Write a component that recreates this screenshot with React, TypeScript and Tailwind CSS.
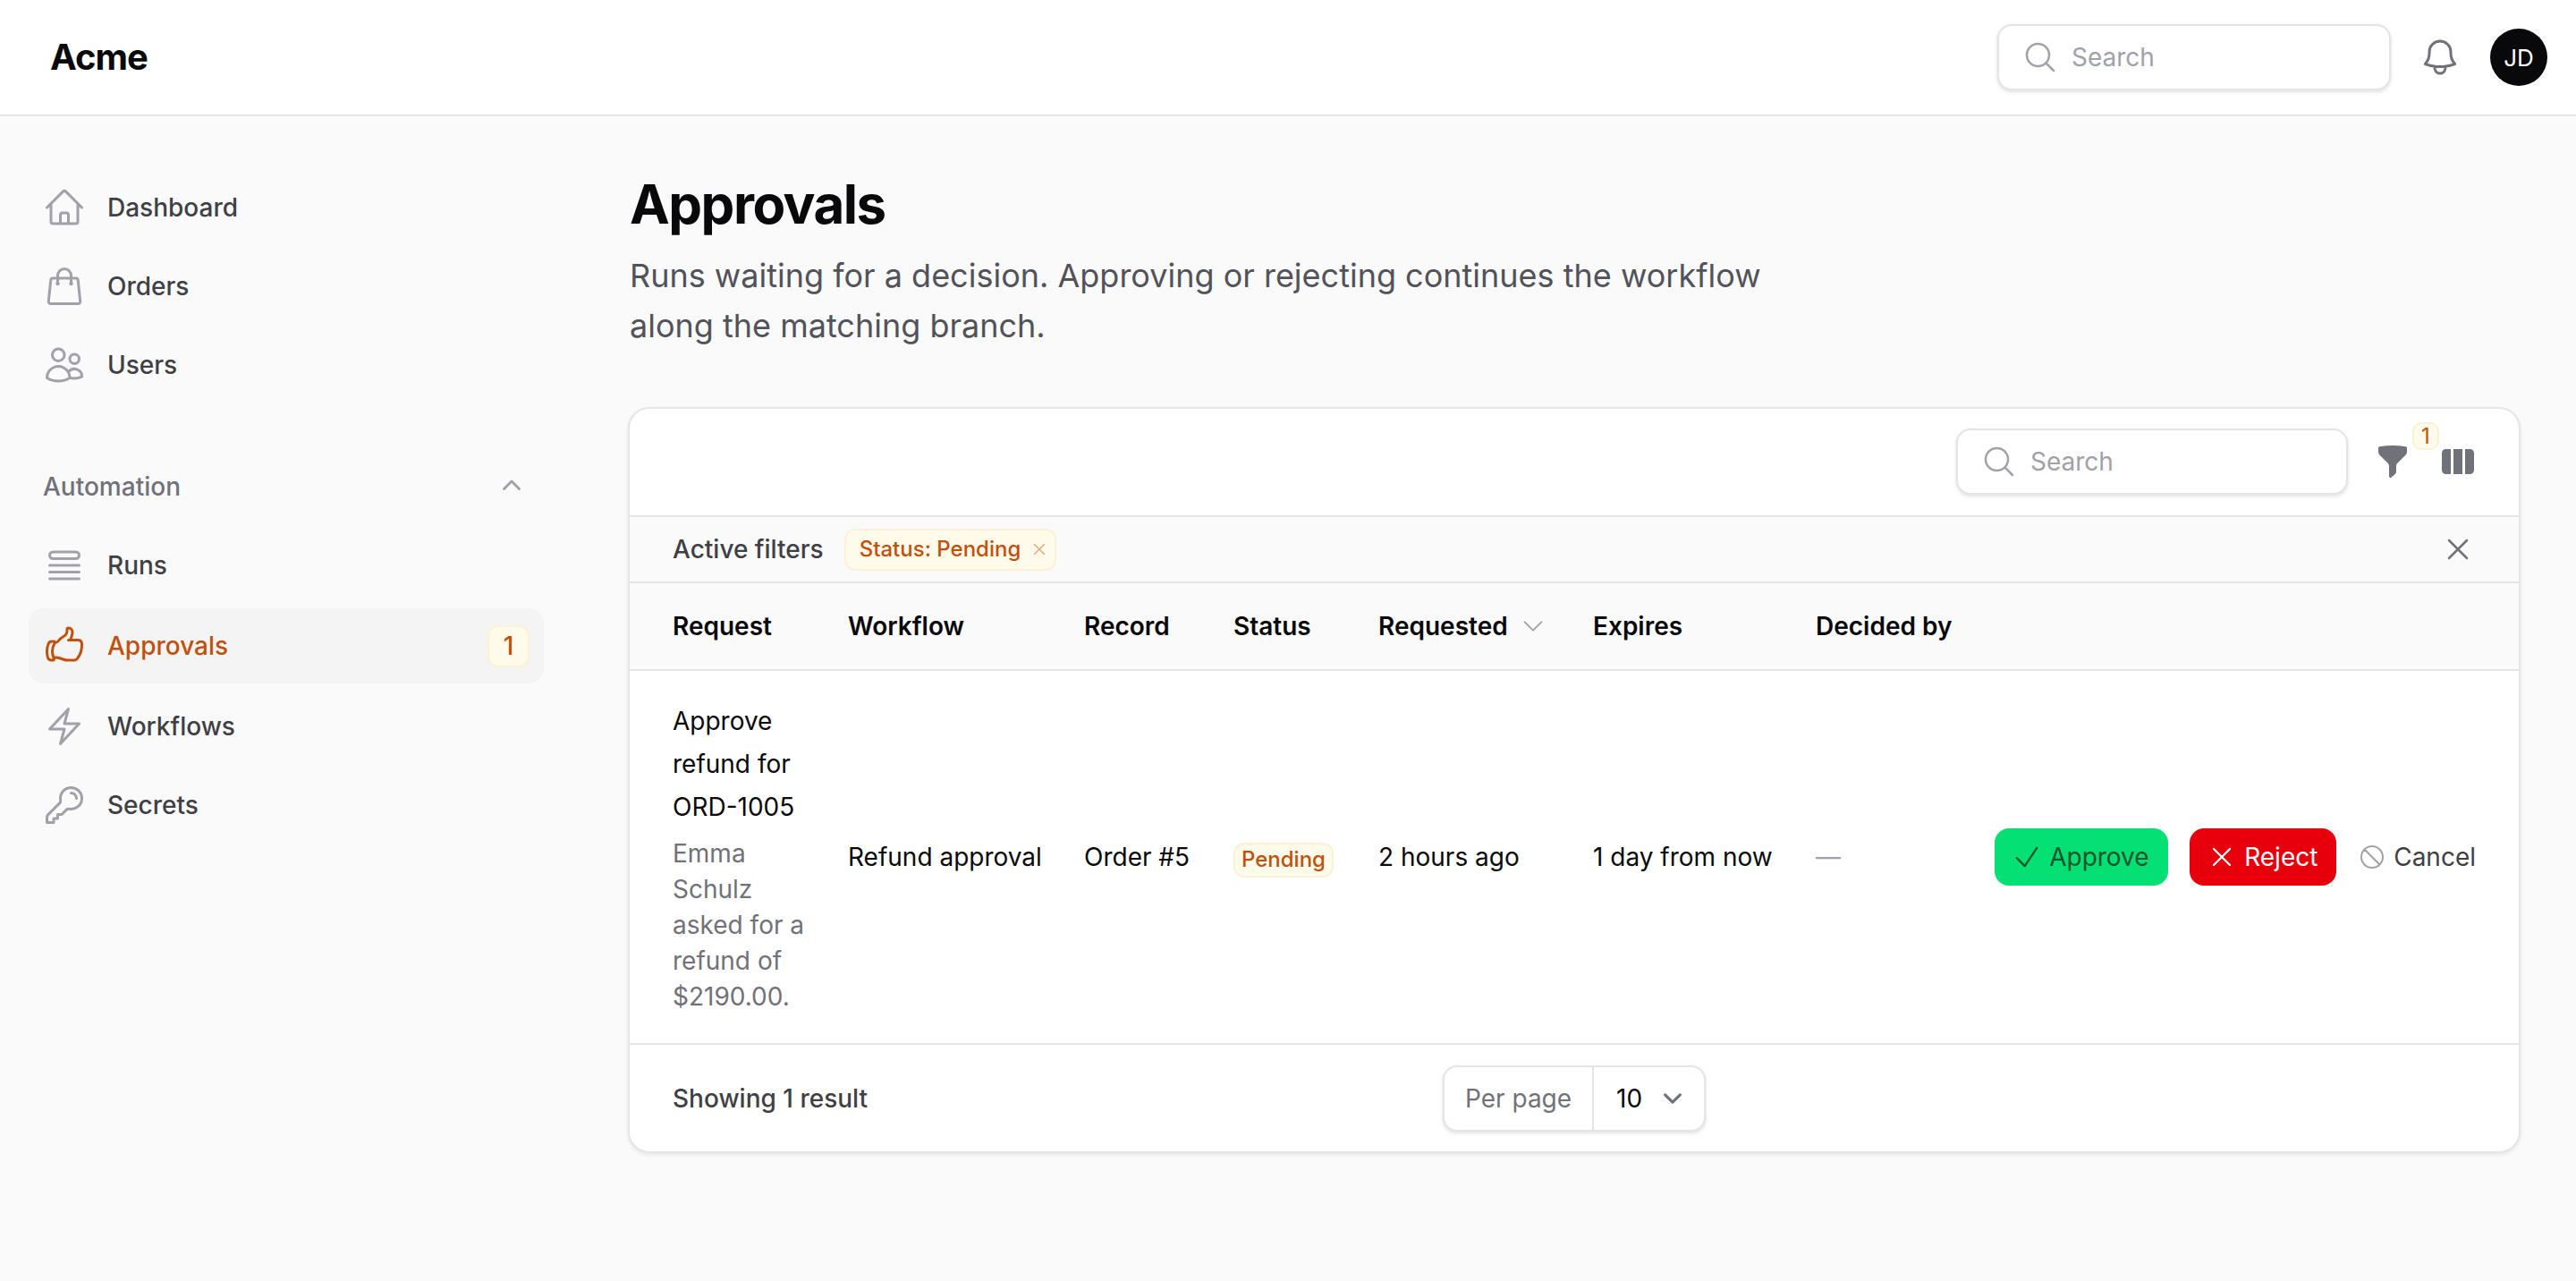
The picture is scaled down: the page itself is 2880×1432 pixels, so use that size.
import type { ComponentType, ReactNode } from "react";
import {
  HiMiniChevronUp,
  HiMiniFunnel,
  HiMiniViewColumns,
  HiOutlineBell,
  HiOutlineBolt,
  HiOutlineCheck,
  HiOutlineChevronDown,
  HiOutlineHandThumbUp,
  HiOutlineHome,
  HiOutlineKey,
  HiOutlineMagnifyingGlass,
  HiOutlineNoSymbol,
  HiOutlineQueueList,
  HiOutlineShoppingBag,
  HiOutlineUsers,
  HiOutlineXMark,
} from "react-icons/hi2";

type Icon = ComponentType<{ className?: string }>;

function NavItem({ icon: Glyph, label, active, badge }: { icon: Icon; label: string; active?: boolean; badge?: string }) {
  return (
    <div
      className={`flex items-center gap-[24px] rounded-[16px] px-[16px] ${
        active ? "h-[84px] bg-[#f4f4f5] text-[#c2500a]" : "h-[80px] text-[#3f3f46]"
      }`}
    >
      <Glyph className={`size-[48px] shrink-0 ${active ? "text-[#c2500a]" : "text-[#a1a1aa]"}`} />
      <span className="flex-1 text-[28px] leading-[48px] font-medium">{label}</span>
      {badge && (
        <span className="flex h-[47px] w-[47px] items-center justify-center rounded-[12px] border-2 border-[#fef0d5] bg-[#fffbeb] text-[28px] leading-none font-medium">
          {badge}
        </span>
      )}
    </div>
  );
}

function SearchBox({ width }: { width: string }) {
  return (
    <div className={`flex h-[74px] items-center gap-[15px] rounded-[16px] border-2 border-[#e4e4e7] bg-white pl-[26px] shadow-[0_2px_4px_rgba(0,0,0,0.12)] ${width}`}>
      <HiOutlineMagnifyingGlass className="size-[40px] text-[#a1a1aa]" />
      <span className="text-[28px] text-[#a1a1aa]">Search</span>
    </div>
  );
}

function Th({ children }: { children: ReactNode }) {
  return <th className="px-[24px] text-left text-[28px] font-semibold text-[#09090b] first:pl-[48px]">{children}</th>;
}

export default function App() {
  return (
    <div className="flex h-[1432px] flex-col bg-[#fafafa] font-['Inter',sans-serif] antialiased">
      <header className="flex h-[130px] shrink-0 items-center border-b-2 border-[#e5e5e5] bg-white pr-[32px] pl-[56px]">
        <div className="flex-1 text-[40px] font-bold tracking-tight text-[#09090b]">Acme</div>
        <SearchBox width="w-[440px]" />
        <HiOutlineBell className="mr-[32px] ml-[31px] size-[48px] text-[#71717a]" />
        <div className="flex size-[64px] items-center justify-center rounded-full bg-[#09090b] text-[26px] text-white">JD</div>
      </header>

      <div className="flex flex-1">
        <aside className="w-[640px] shrink-0 px-[32px] pt-[62px]">
          <nav className="flex flex-col gap-[8px]">
            <NavItem icon={HiOutlineHome} label="Dashboard" />
            <NavItem icon={HiOutlineShoppingBag} label="Orders" />
            <NavItem icon={HiOutlineUsers} label="Users" />
          </nav>
          <div className="mt-[56px] flex h-[80px] items-center justify-between px-[16px] text-[28px] font-medium text-[#71717a]">
            Automation
            <HiMiniChevronUp className="size-[40px] text-[#a1a1aa]" />
          </div>
          <nav className="mt-[8px] flex flex-col gap-[8px]">
            <NavItem icon={HiOutlineQueueList} label="Runs" />
            <NavItem icon={HiOutlineHandThumbUp} label="Approvals" active badge="1" />
            <NavItem icon={HiOutlineBolt} label="Workflows" />
            <NavItem icon={HiOutlineKey} label="Secrets" />
          </nav>
        </aside>

        <main className="min-w-0 flex-1 px-[64px] pt-[62px]">
          <h1 className="text-[60px] leading-[72px] font-bold tracking-tight text-[#09090b]">Approvals</h1>
          <p className="mt-[16px] max-w-[1344px] text-[36px] leading-[56px] text-[#52525b]">
            Runs waiting for a decision. Approving or rejecting continues the workflow along the matching branch.
          </p>

          <section className="-mx-[2px] mt-[63px] overflow-hidden rounded-[24px] border-2 border-[#e5e5e5] bg-white shadow-[0_2px_4px_rgba(0,0,0,0.08)]">
            <div className="flex h-[119px] items-center justify-end pr-[48px] pb-[1px]">
              <SearchBox width="w-[438px]" />
              <div className="relative ml-[30px]">
                <HiMiniFunnel className="size-[40px] text-[#71717a]" />
                <span className="absolute -top-[24px] left-[42px] flex h-[31px] w-[30px] items-center justify-center rounded-[10px] border-2 border-[#fef0d5] bg-[#fffbeb] text-[24px] leading-none text-[#c2500a]">
                  1
                </span>
              </div>
              <HiMiniViewColumns className="ml-[33px] size-[40px] text-[#71717a]" />
            </div>

            <div className="flex h-[74px] items-center border-t-2 border-[#e5e5e5] bg-[#fafafa] px-[48px]">
              <span className="text-[28px] font-medium text-[#3f3f46]">Active filters</span>
              <span className="ml-[23px] flex h-[47px] items-center gap-[10px] rounded-[12px] border-2 border-[#fef0d5] bg-[#fffbeb] pr-[6px] pl-[15px] text-[24px] font-medium text-[#c2500a]">
                Status: Pending
                <HiOutlineXMark className="size-[22px] opacity-50" />
              </span>
              <HiOutlineXMark className="ml-auto size-[40px] text-[#71717a]" />
            </div>

            <table className="w-full table-fixed border-collapse">
              <colgroup>
                <col className="w-[220px]" />
                <col className="w-[264px]" />
                <col className="w-[167px]" />
                <col className="w-[162px]" />
                <col className="w-[240px]" />
                <col className="w-[249px]" />
                <col className="w-[200px]" />
                <col className="w-[610px]" />
              </colgroup>
              <thead>
                <tr className="h-[98px] border-t-2 border-[#e5e5e5] bg-[#fafafa]">
                  <Th>Request</Th>
                  <Th>Workflow</Th>
                  <Th>Record</Th>
                  <Th>Status</Th>
                  <Th>
                    <span className="flex items-center gap-[13px]">
                      Requested
                      <HiOutlineChevronDown className="size-[30px] text-[#a1a1aa]" />
                    </span>
                  </Th>
                  <Th>Expires</Th>
                  <th className="px-[24px] text-left text-[28px] font-semibold whitespace-nowrap text-[#09090b]">Decided by</th>
                  <th />
                </tr>
              </thead>
              <tbody className="text-[28px] text-[#09090b]">
                <tr className="border-t-2 border-[#e5e5e5]">
                  <td className="py-[32px] pr-[24px] pl-[48px]">
                    <div className="leading-[48px]">Approve refund for ORD-1005</div>
                    <div className="mt-[8px] leading-[40px] text-[#71717a]">Emma Schulz asked for a refund of $2190.00.</div>
                  </td>
                  <td className="px-[24px] whitespace-nowrap">Refund approval</td>
                  <td className="px-[24px] whitespace-nowrap">Order #5</td>
                  <td className="px-[24px]">
                    <span className="relative top-[3px] flex h-[39px] w-[112px] items-center justify-center rounded-[12px] border-2 border-[#fef0d5] bg-[#fffbeb] text-[24px] font-medium text-[#c2500a]">
                      Pending
                    </span>
                  </td>
                  <td className="px-[24px] whitespace-nowrap">2 hours ago</td>
                  <td className="px-[24px] whitespace-nowrap">1 day from now</td>
                  <td className="px-[24px] text-[#a1a1aa]">—</td>
                  <td className="pr-[48px]">
                    <div className="flex items-center justify-end">
                      <button className="flex h-[64px] w-[194px] items-center gap-[7px] rounded-[16px] bg-[#05e075] pl-[18px] text-[#14532d]">
                        <HiOutlineCheck className="size-[36px]" />
                        Approve
                      </button>
                      <button className="ml-[24px] flex h-[64px] w-[164px] items-center gap-[7px] rounded-[16px] bg-[#e7000b] pl-[18px] text-white">
                        <HiOutlineXMark className="size-[36px]" />
                        Reject
                      </button>
                      <button className="ml-[24px] flex items-center gap-[8px] text-[#3f3f46]">
                        <HiOutlineNoSymbol className="size-[32px] text-[#a1a1aa]" />
                        Cancel
                      </button>
                    </div>
                  </td>
                </tr>
              </tbody>
            </table>

            <div className="grid h-[121px] grid-cols-3 items-center border-t-2 border-[#e5e5e5] px-[48px]">
              <span className="text-[28px] font-medium text-[#3f3f46]">Showing 1 result</span>
              <div className="flex justify-center">
                <div className="flex h-[74px] w-[294px] items-center rounded-[16px] border-2 border-[#e4e4e7] bg-white text-[28px] shadow-[0_2px_4px_rgba(0,0,0,0.12)]">
                  <span className="flex h-full w-[167px] items-center border-r-2 border-[#e4e4e7] pl-[23px] text-[#71717a]">Per page</span>
                  <span className="ml-[25px] text-[#09090b]">10</span>
                  <svg viewBox="0 0 20 20" fill="none" className="ml-[13px] size-[42px]">
                    <path d="M6 8l4 4 4-4" stroke="#6b7280" strokeWidth="1.5" strokeLinecap="round" strokeLinejoin="round" />
                  </svg>
                </div>
              </div>
            </div>
          </section>
        </main>
      </div>
    </div>
  );
}
